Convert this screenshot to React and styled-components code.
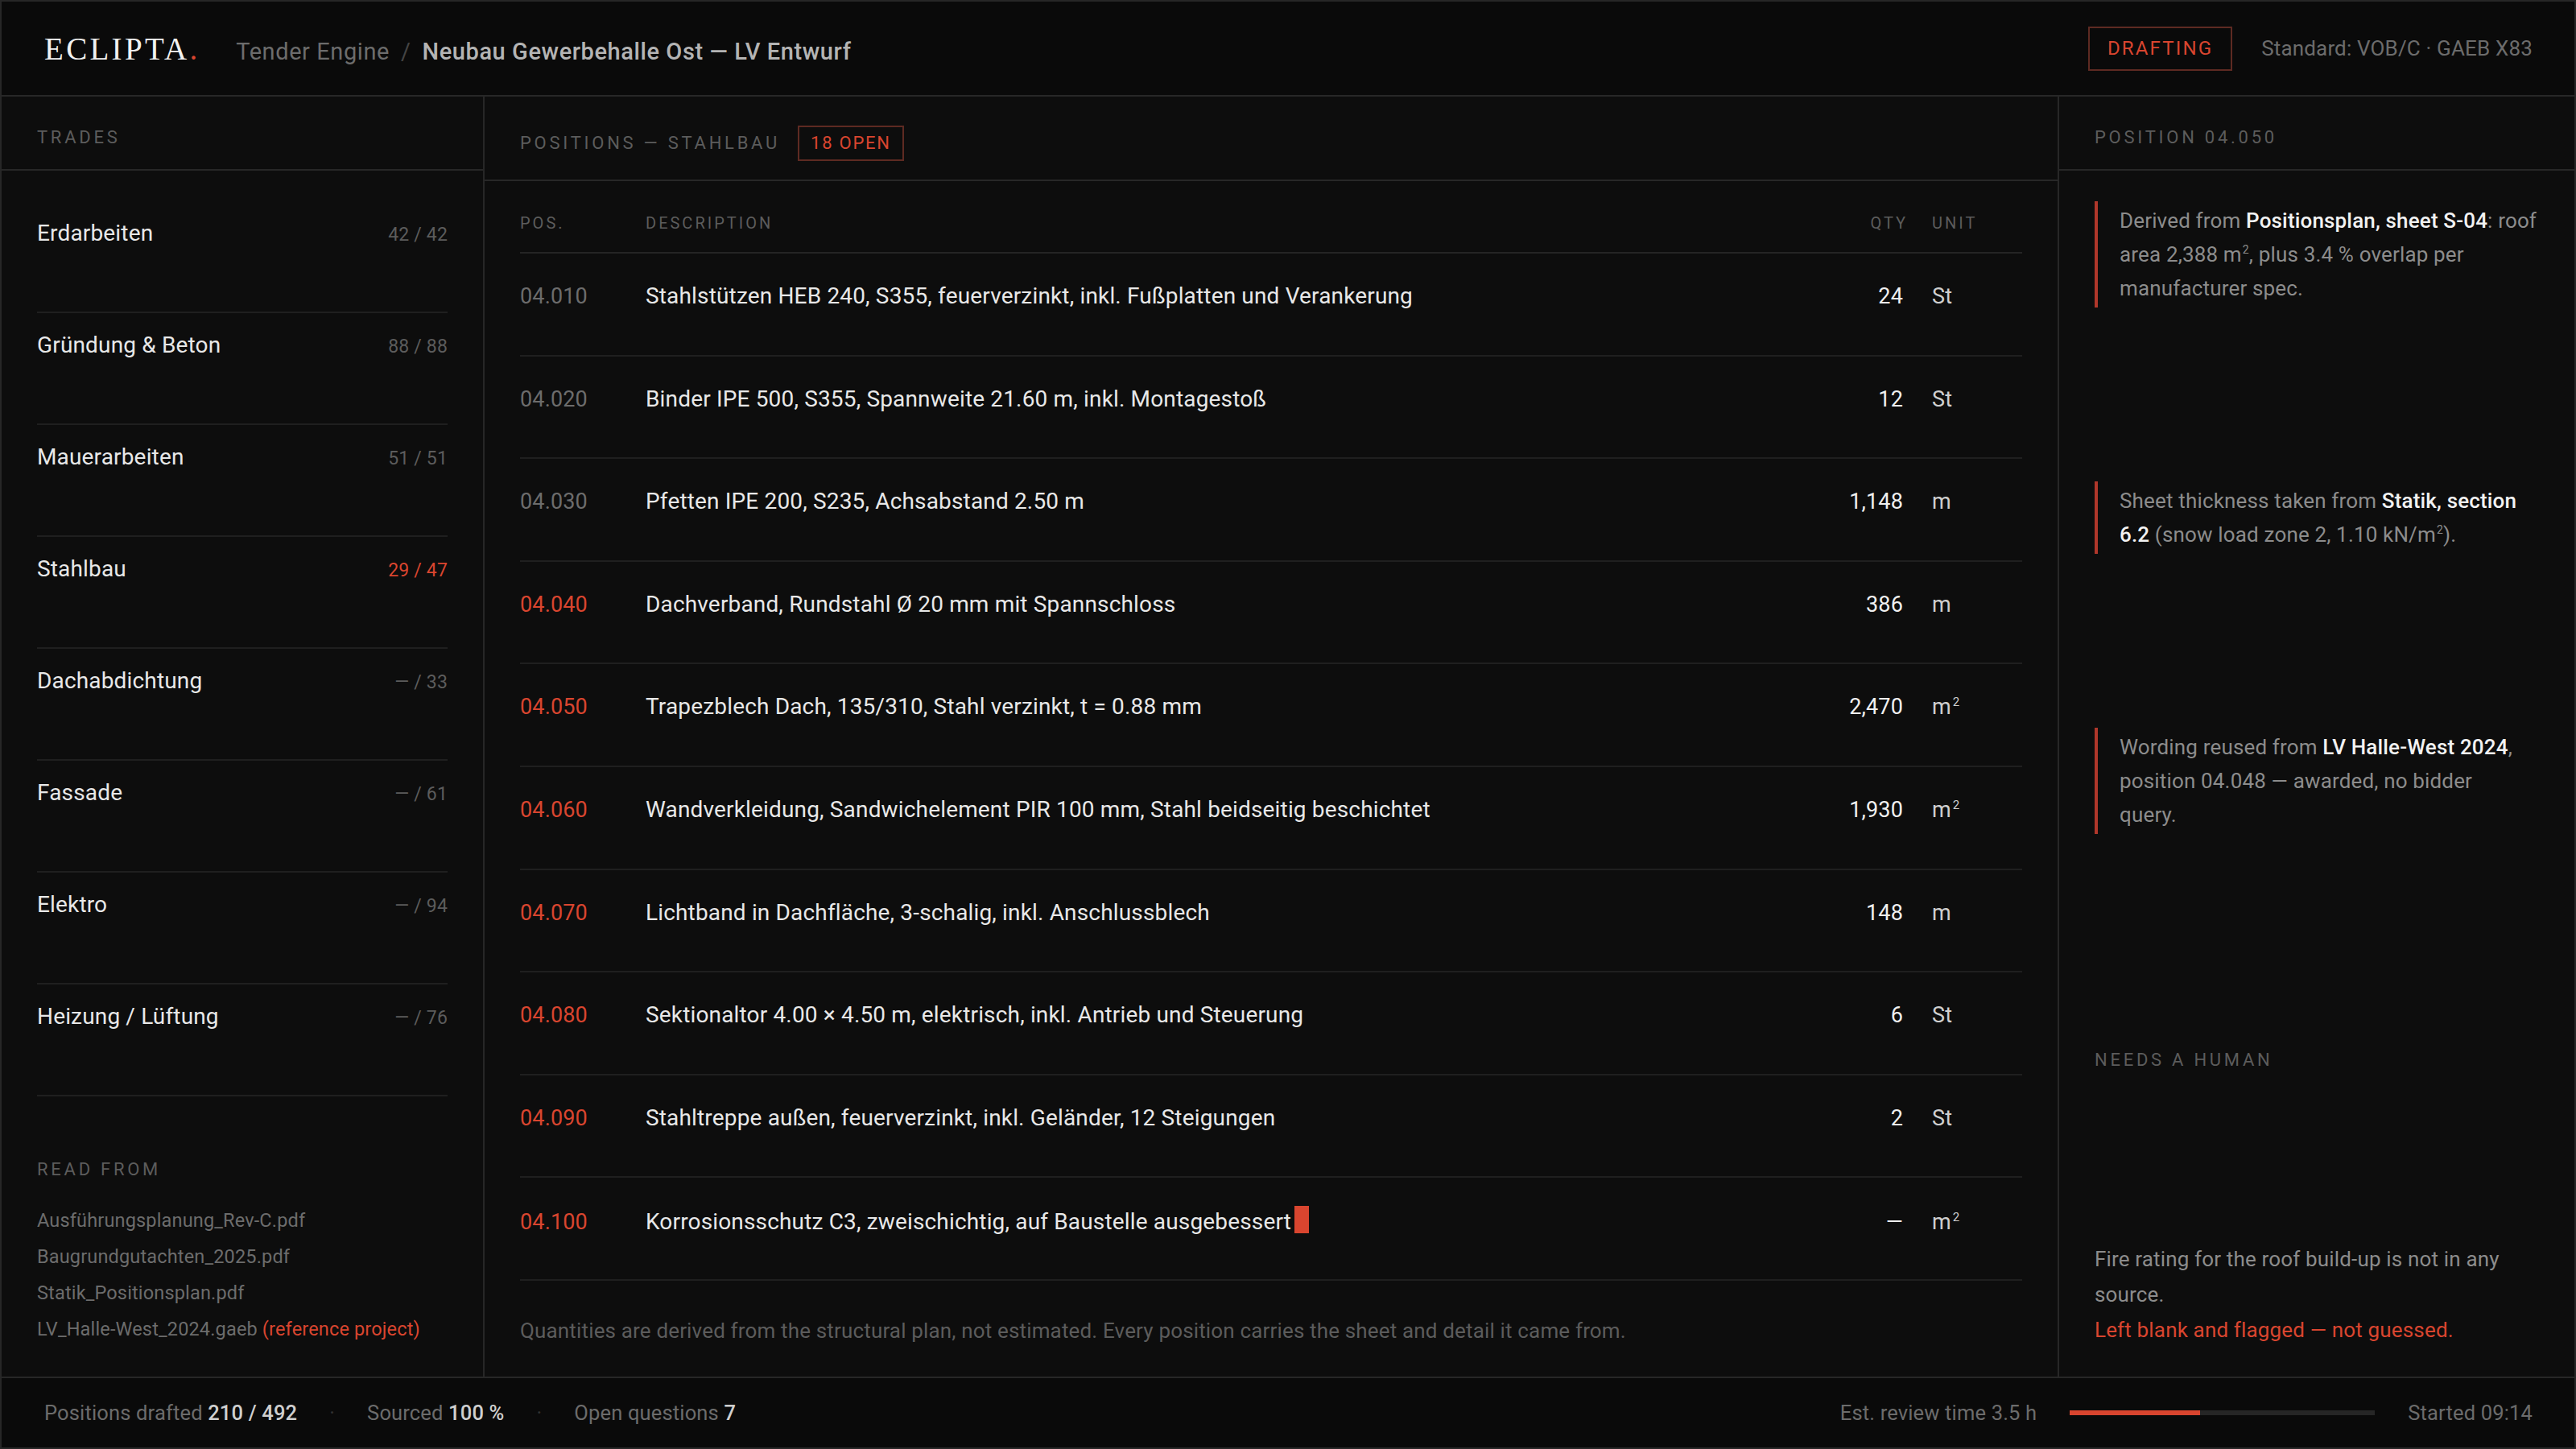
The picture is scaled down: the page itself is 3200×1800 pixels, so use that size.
import styled, { createGlobalStyle } from "styled-components"

const colors = {
  page: "#0d0d0d",
  bar: "#0a0a0a",
  frame: "#272727",
  rule: "#1f1f1f",
  text: "#e8e8e8",
  soft: "#8c8c8c",
  mute: "#6c6c6c",
  dim: "#5c5c5c",
  red: "#d9452f",
  redDeep: "#b0372b",
  redLine: "#5e2a22",
}

const GlobalStyle = createGlobalStyle`
  html, body {
    margin: 0;
    padding: 0;
    background: ${colors.page};
  }
  body {
    font-family: Roboto, "Liberation Sans", sans-serif;
    color: ${colors.text};
    letter-spacing: 0.01em;
    -webkit-font-smoothing: antialiased;
  }
  * {
    box-sizing: border-box;
  }
`

const Frame = styled.div`
  width: 3200px;
  height: 1800px;
  border: 2px solid ${colors.frame};
  display: flex;
  flex-direction: column;
  background: ${colors.page};
`

const TopBar = styled.header`
  height: 118px;
  flex: none;
  display: flex;
  align-items: center;
  justify-content: space-between;
  padding: 0 52px 0 53px;
  background: ${colors.bar};
  border-bottom: 2px solid ${colors.frame};
`

const Brand = styled.div`
  display: flex;
  align-items: baseline;
`

const Logo = styled.div`
  font-family: "Liberation Serif", "Times New Roman", serif;
  font-size: 39px;
  letter-spacing: 0.085em;
  color: #f2f2f2;
  margin-right: 48px;
  span {
    color: ${colors.red};
    letter-spacing: 0;
  }
`

const Crumbs = styled.div`
  display: flex;
  align-items: baseline;
  gap: 14px;
  font-size: 29px;
  letter-spacing: 0.02em;
  color: ${colors.mute};
  strong {
    font-weight: 500;
    color: #b4b4b4;
  }
  i {
    font-style: normal;
    color: #444;
  }
`

const TopRight = styled.div`
  display: flex;
  align-items: center;
  gap: 36px;
  font-size: 26px;
  color: ${colors.mute};
`

const Tag = styled.span`
  display: inline-flex;
  align-items: center;
  border: 2px solid ${colors.redLine};
  color: ${colors.red};
  text-transform: uppercase;
  letter-spacing: ${(p) => (p.$large ? "0.09em" : "0.08em")};
  font-size: ${(p) => (p.$large ? "24px" : "22px")};
  height: ${(p) => (p.$large ? "55px" : "44px")};
  padding: ${(p) => (p.$large ? "0 22px" : "0 14px")};
`

const Main = styled.div`
  flex: 1;
  min-height: 0;
  display: grid;
  grid-template-columns: 600px 1fr 642px;
`

const Panel = styled.section`
  display: flex;
  flex-direction: column;
  min-height: 0;
  border-right: ${(p) => (p.$edge === "right" ? `2px solid ${colors.frame}` : "none")};
  border-left: ${(p) => (p.$edge === "left" ? `2px solid ${colors.frame}` : "none")};
`

const PanelHead = styled.div`
  flex: none;
  height: ${(p) => (p.$tall ? "105px" : "92px")};
  display: flex;
  align-items: center;
  gap: 22px;
  padding: 12px 44px 0;
  border-bottom: 2px solid ${colors.frame};
`

const Label = styled.div`
  font-size: 22px;
  line-height: 26px;
  letter-spacing: 0.17em;
  text-transform: uppercase;
  color: ${colors.dim};
`

/* trades */

const TradeList = styled.ul`
  list-style: none;
  margin: 38px 44px 0;
  padding: 0;
`

const Trade = styled.li`
  display: flex;
  justify-content: space-between;
  align-items: baseline;
  padding: 22px 0 79px;
  border-bottom: 2px solid ${colors.rule};
`

const TradeName = styled.span`
  font-size: 28px;
  line-height: 36px;
  color: ${colors.text};
`

const TradeCount = styled.span`
  font-size: 23px;
  color: ${(p) => (p.$active ? colors.red : colors.dim)};
`

const Sources = styled.div`
  margin-top: auto;
  padding: 0 44px 36px;
`

const FileList = styled.ul`
  list-style: none;
  margin: 28px 0 0;
  padding: 0;
  li {
    font-size: 23.5px;
    line-height: 45px;
    color: ${colors.mute};
    white-space: nowrap;
  }
  em {
    font-style: normal;
    color: ${colors.red};
  }
`

/* positions */

const Table = styled.div`
  padding: 0 44px;
`

const Row = styled.div`
  display: grid;
  grid-template-columns: 156px 1fr 120px 112px;
  align-items: baseline;
  height: ${(p) => (p.$head ? "90px" : "127.6px")};
  padding-top: ${(p) => (p.$head ? "40px" : "35px")};
  border-bottom: 2px solid ${(p) => (p.$head ? "#242424" : colors.rule)};
`

const HeadCell = styled.div`
  font-size: 20px;
  line-height: 24px;
  letter-spacing: 0.15em;
  color: ${colors.dim};
  text-align: ${(p) => (p.$right ? "right" : "left")};
  padding-right: ${(p) => (p.$right ? "30px" : "0")};
`

const PosNo = styled.div`
  font-size: 27px;
  line-height: 36px;
  color: ${(p) => (p.$open ? colors.red : colors.mute)};
`

const Desc = styled.div`
  font-size: 28px;
  line-height: 36px;
  color: ${colors.text};
  white-space: nowrap;
`

const Qty = styled.div`
  font-size: 27px;
  line-height: 36px;
  text-align: right;
  padding-right: 36px;
  color: #f0f0f0;
`

const Unit = styled.div`
  font-size: 27px;
  line-height: 36px;
  color: #cfcfcf;
  sup {
    font-size: 15px;
    line-height: 0;
    margin-left: 2px;
  }
`

const Caret = styled.span`
  display: inline-block;
  width: 18px;
  height: 34px;
  margin-left: 4px;
  vertical-align: -5px;
  background: ${colors.red};
`

const Footnote = styled.p`
  margin: 0;
  padding: 44px 44px 38px;
  font-size: 26px;
  line-height: 36px;
  color: ${colors.dim};
  white-space: nowrap;
`

/* detail */

const Notes = styled.div`
  display: flex;
  flex-direction: column;
  gap: 216px;
  margin: 38px 44px 0;
`

const Note = styled.p`
  margin: 0;
  padding: 3px 0 3px 27px;
  border-left: 4px solid ${colors.redDeep};
  font-size: 26px;
  line-height: 42px;
  color: ${colors.soft};
  strong {
    font-weight: 500;
    color: #f2f2f2;
  }
  sup {
    font-size: 14px;
    line-height: 0;
    margin-left: 1px;
  }
`

const Human = styled.div`
  margin-top: auto;
  padding: 0 44px 36px;
`

const HumanText = styled.p`
  margin: ${(p) => (p.$first ? "212px 0 0" : "0")};
  font-size: 26px;
  line-height: 44px;
  color: ${(p) => (p.$flag ? colors.red : colors.soft)};
`

/* footer */

const StatusBar = styled.footer`
  height: 88px;
  flex: none;
  display: flex;
  align-items: center;
  justify-content: space-between;
  padding: 0 52px 0 53px;
  background: ${colors.bar};
  border-top: 2px solid ${colors.frame};
  font-size: 25.5px;
  color: ${colors.mute};
`

const StatGroup = styled.div`
  display: flex;
  align-items: center;
  gap: ${(p) => p.$gap || "40px"};
`

const Stat = styled.span`
  white-space: nowrap;
  b {
    font-weight: 500;
    color: #cfcfcf;
  }
`

const Dot = styled.span`
  color: #333;
`

const Track = styled.div`
  width: 379px;
  height: 6px;
  background: #262626;
`

const Fill = styled.div`
  height: 100%;
  background: ${colors.red};
`

const trades = [
  { name: "Erdarbeiten", count: "42 / 42" },
  { name: "Gründung & Beton", count: "88 / 88" },
  { name: "Mauerarbeiten", count: "51 / 51" },
  { name: "Stahlbau", count: "29 / 47", active: true },
  { name: "Dachabdichtung", count: "— / 33" },
  { name: "Fassade", count: "— / 61" },
  { name: "Elektro", count: "— / 94" },
  { name: "Heizung / Lüftung", count: "— / 76" },
]

const positions = [
  { no: "04.010", text: "Stahlstützen HEB 240, S355, feuerverzinkt, inkl. Fußplatten und Verankerung", qty: "24", unit: "St" },
  { no: "04.020", text: "Binder IPE 500, S355, Spannweite 21.60 m, inkl. Montagestoß", qty: "12", unit: "St" },
  { no: "04.030", text: "Pfetten IPE 200, S235, Achsabstand 2.50 m", qty: "1,148", unit: "m" },
  { no: "04.040", text: "Dachverband, Rundstahl Ø 20 mm mit Spannschloss", qty: "386", unit: "m", open: true },
  { no: "04.050", text: "Trapezblech Dach, 135/310, Stahl verzinkt, t = 0.88 mm", qty: "2,470", unit: "m2", open: true },
  { no: "04.060", text: "Wandverkleidung, Sandwichelement PIR 100 mm, Stahl beidseitig beschichtet", qty: "1,930", unit: "m2", open: true },
  { no: "04.070", text: "Lichtband in Dachfläche, 3-schalig, inkl. Anschlussblech", qty: "148", unit: "m", open: true },
  { no: "04.080", text: "Sektionaltor 4.00 × 4.50 m, elektrisch, inkl. Antrieb und Steuerung", qty: "6", unit: "St", open: true },
  { no: "04.090", text: "Stahltreppe außen, feuerverzinkt, inkl. Geländer, 12 Steigungen", qty: "2", unit: "St", open: true },
  { no: "04.100", text: "Korrosionsschutz C3, zweischichtig, auf Baustelle ausgebessert", qty: "—", unit: "m2", open: true, typing: true },
]

const drafted = 210
const total = 492

function UnitText({ unit }) {
  if (unit === "m2") {
    return (
      <Unit>
        m<sup>2</sup>
      </Unit>
    )
  }
  return <Unit>{unit}</Unit>
}

export default function App() {
  return (
    <>
      <GlobalStyle />
      <Frame>
        <TopBar>
          <Brand>
            <Logo>
              ECLIPTA<span>.</span>
            </Logo>
            <Crumbs>
              <span>Tender Engine</span>
              <i>/</i>
              <strong>Neubau Gewerbehalle Ost — LV Entwurf</strong>
            </Crumbs>
          </Brand>
          <TopRight>
            <Tag $large>Drafting</Tag>
            <span>Standard: VOB/C · GAEB X83</span>
          </TopRight>
        </TopBar>

        <Main>
          <Panel $edge="right">
            <PanelHead>
              <Label>Trades</Label>
            </PanelHead>
            <TradeList>
              {trades.map((t) => (
                <Trade key={t.name}>
                  <TradeName>{t.name}</TradeName>
                  <TradeCount $active={t.active}>{t.count}</TradeCount>
                </Trade>
              ))}
            </TradeList>
            <Sources>
              <Label>Read from</Label>
              <FileList>
                <li>Ausführungsplanung_Rev-C.pdf</li>
                <li>Baugrundgutachten_2025.pdf</li>
                <li>Statik_Positionsplan.pdf</li>
                <li>
                  LV_Halle-West_2024.gaeb <em>(reference project)</em>
                </li>
              </FileList>
            </Sources>
          </Panel>

          <Panel>
            <PanelHead $tall>
              <Label>Positions — Stahlbau</Label>
              <Tag>18 open</Tag>
            </PanelHead>
            <Table>
              <Row $head>
                <HeadCell>POS.</HeadCell>
                <HeadCell>DESCRIPTION</HeadCell>
                <HeadCell $right>QTY</HeadCell>
                <HeadCell>UNIT</HeadCell>
              </Row>
              {positions.map((p) => (
                <Row key={p.no}>
                  <PosNo $open={p.open}>{p.no}</PosNo>
                  <Desc>
                    {p.text}
                    {p.typing && <Caret />}
                  </Desc>
                  <Qty>{p.qty}</Qty>
                  <UnitText unit={p.unit} />
                </Row>
              ))}
            </Table>
            <Footnote>
              Quantities are derived from the structural plan, not estimated. Every position carries the sheet and
              detail it came from.
            </Footnote>
          </Panel>

          <Panel $edge="left">
            <PanelHead>
              <Label>Position 04.050</Label>
            </PanelHead>
            <Notes>
              <Note>
                Derived from <strong>Positionsplan, sheet S-04</strong>: roof area 2,388 m<sup>2</sup>, plus 3.4 %
                overlap per manufacturer spec.
              </Note>
              <Note>
                Sheet thickness taken from <strong>Statik, section 6.2</strong> (snow load zone 2, 1.10 kN/m
                <sup>2</sup>).
              </Note>
              <Note>
                Wording reused from <strong>LV Halle-West 2024</strong>, position 04.048 — awarded, no bidder
                <br />
                query.
              </Note>
            </Notes>
            <Human>
              <Label>Needs a human</Label>
              <HumanText $first>Fire rating for the roof build-up is not in any source.</HumanText>
              <HumanText $flag>Left blank and flagged — not guessed.</HumanText>
            </Human>
          </Panel>
        </Main>

        <StatusBar>
          <StatGroup>
            <Stat>
              Positions drafted <b>{drafted} / {total}</b>
            </Stat>
            <Dot>·</Dot>
            <Stat>
              Sourced <b>100 %</b>
            </Stat>
            <Dot>·</Dot>
            <Stat>
              Open questions <b>7</b>
            </Stat>
          </StatGroup>
          <StatGroup $gap="41px">
            <Stat>Est. review time 3.5 h</Stat>
            <Track>
              <Fill style={{ width: `${(drafted / total) * 100}%` }} />
            </Track>
            <Stat>Started 09:14</Stat>
          </StatGroup>
        </StatusBar>
      </Frame>
    </>
  )
}
